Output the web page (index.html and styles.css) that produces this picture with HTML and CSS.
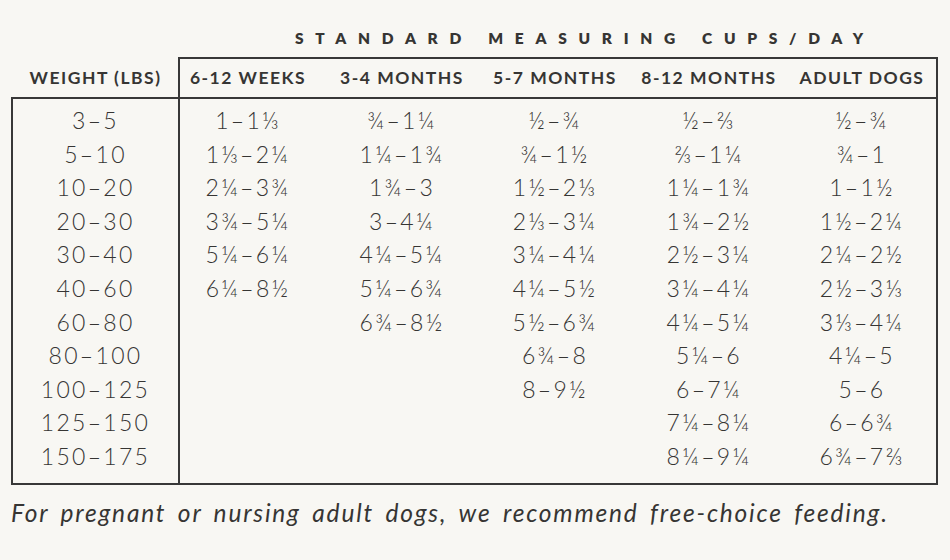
FILE: index.html
```html
<!DOCTYPE html>
<html lang="en">
<head>
<meta charset="utf-8">
<title>Standard Measuring Cups/Day</title>
<link rel="stylesheet" href="styles.css">
</head>
<body>
<div class="chart">
  <h2 class="title">STANDARD MEASURING CUPS/DAY</h2>
  <div class="table">
    <div class="head">
      <div class="weight-h">WEIGHT (LBS)</div>
      <div class="cols-h">
        <div>6-12 WEEKS</div>
        <div>3-4 MONTHS</div>
        <div>5-7 MONTHS</div>
        <div>8-12 MONTHS</div>
        <div>ADULT DOGS</div>
      </div>
    </div>
    <div class="body">
      <ul class="weights">
        <li>3–5</li><li>5–10</li><li>10–20</li><li>20–30</li><li>30–40</li><li>40–60</li><li>60–80</li><li>80–100</li><li>100–125</li><li>125–150</li><li>150–175</li>
      </ul>
      <div class="cols">
        <ul class="col">
          <li>1–1⅓</li><li>1⅓–2¼</li><li>2¼–3¾</li><li>3¾–5¼</li><li>5¼–6¼</li><li>6¼–8½</li>
        </ul>
        <ul class="col">
          <li>¾–1¼</li><li>1¼–1¾</li><li>1¾–3</li><li>3–4¼</li><li>4¼–5¼</li><li>5¼–6¾</li><li>6¾–8½</li>
        </ul>
        <ul class="col">
          <li>½–¾</li><li>¾–1½</li><li>1½–2⅓</li><li>2⅓–3¼</li><li>3¼–4¼</li><li>4¼–5½</li><li>5½–6¾</li><li>6¾–8</li><li>8–9½</li>
        </ul>
        <ul class="col">
          <li>½–⅔</li><li>⅔–1¼</li><li>1¼–1¾</li><li>1¾–2½</li><li>2½–3¼</li><li>3¼–4¼</li><li>4¼–5¼</li><li>5¼–6</li><li>6–7¼</li><li>7¼–8¼</li><li>8¼–9¼</li>
        </ul>
        <ul class="col">
          <li>½–¾</li><li>¾–1</li><li>1–1½</li><li>1½–2¼</li><li>2¼–2½</li><li>2½–3⅓</li><li>3⅓–4¼</li><li>4¼–5</li><li>5–6</li><li>6–6¾</li><li>6¾–7⅔</li>
        </ul>
      </div>
    </div>
  </div>
  <p class="note">For pregnant or nursing adult dogs, we recommend free-choice feeding.</p>
</div>
</body>
</html>
```
FILE: styles.css
```css
html, body {
  margin: 0;
  padding: 0;
  background: #f8f7f3;
}

body {
  color: #363533;
  font-family: Lato, "Liberation Sans", sans-serif;
}

.chart {
  width: 950px;
  height: 560px;
  padding-top: 28px;
  box-sizing: border-box;
  overflow: hidden;
}

.title {
  margin: 0 0 9px 295px;
  font-size: 15.5px;
  font-weight: 800;
  line-height: 20px;
  letter-spacing: 11.7px;
  white-space: nowrap;
}

.table {
  margin-left: 11px;
  width: 927px;
}

.head {
  display: flex;
  font-size: 17.5px;
  font-weight: 700;
  letter-spacing: 1.5px;
}

.weight-h {
  width: 165px;
  border-left: 2px solid transparent;
  margin-top: 2px;
  line-height: 38px;
  text-align: center;
  white-space: nowrap;
}

.cols-h {
  flex: 1;
  display: grid;
  grid-template-columns: 136px 172px 134px 174px 132px;
  border: 2px solid #383838;
  border-bottom: 0;
  line-height: 38px;
  text-align: center;
  white-space: nowrap;
}

.body {
  display: flex;
  height: 384px;
  border: 2px solid #383838;
}

.weights,
.col {
  list-style: none;
  margin: 0;
  padding: 5px 0 0;
  font-size: 23px;
  font-weight: 300;
  line-height: 33.6px;
  letter-spacing: 2.3px;
  text-align: center;
  white-space: nowrap;
}

.weights {
  width: 165px;
  border-right: 2px solid #383838;
}

.cols {
  flex: 1;
  display: grid;
  grid-template-columns: 136px 172px 134px 174px 132px;
}

.note {
  margin: 13px 0 0;
  padding-left: 11px;
  font-size: 24.5px;
  font-style: italic;
  font-weight: 400;
  line-height: 30px;
  letter-spacing: 1.8px;
  word-spacing: 4px;
  white-space: nowrap;
}
```
